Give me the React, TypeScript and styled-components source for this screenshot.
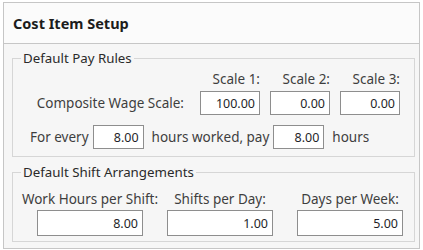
import React from "react";
import styled, { createGlobalStyle } from "styled-components";

const GlobalStyle = createGlobalStyle`
  body {
    margin: 0;
    background: #ffffff;
    font-family: "Noto Sans", "Open Sans", sans-serif;
  }
`;

const Frame = styled.div`
  width: 417px;
  height: 247px;
  margin: 2px 0 0 3px;
  border: 1px solid #c6c6c6;
  box-sizing: border-box;
  background: #f6f6f6;
  display: flex;
  flex-direction: column;
`;

const Header = styled.div`
  height: 41px;
  box-sizing: border-box;
  border-bottom: 1px solid #c6c6c6;
  background: #fbfbfb;
  display: flex;
  align-items: center;
  padding-left: 9px;
`;

const Title = styled.h1`
  margin: 0;
  font-size: 14.5px;
  font-weight: 700;
  color: #1c1c1c;
`;

const Body = styled.div`
  flex: 1;
  padding: 6px 4px 5px 8px;
  display: flex;
  flex-direction: column;
`;

const Group = styled.fieldset<{ $gap?: number; $top?: number; $bottom?: number }>`
  margin: ${(p) => p.$gap ?? 0}px 0 0 0;
  padding: ${(p) => p.$top ?? 5}px 0 ${(p) => p.$bottom ?? 7}px 0;
  min-width: 0;
  border: 1px solid #d6d6d6;
  font-size: 13.5px;
  color: #3e3e3e;
`;

const Legend = styled.legend`
  margin-left: 8px;
  padding: 0 2px;
  font-size: 13.3px;
  line-height: 16px;
  color: #2a2a2a;
`;

const ScaleGrid = styled.div`
  display: grid;
  grid-template-columns: 1fr 60px 60px 60px;
  column-gap: 10px;
  row-gap: 4px;
  padding-right: 14px;
  align-items: center;
`;

const Label = styled.span<{ $align?: string }>`
  line-height: 16px;
  white-space: nowrap;
  text-align: ${(p) => p.$align ?? "left"};
  justify-self: ${(p) => p.$align ?? "start"};
`;

const RowLabel = styled(Label)`
  justify-self: end;
  margin-right: 6px;
`;

const Field = styled.div<{ $w?: number; $h?: number }>`
  width: ${(p) => (p.$w ? `${p.$w}px` : "100%")};
  height: ${(p) => p.$h ?? 24}px;
  box-sizing: border-box;
  border: 1px solid #8e8e8e;
  background: #ffffff;
  display: flex;
  align-items: center;
  justify-content: flex-end;
  padding-right: 4px;
  font-size: 12.5px;
  color: #1f1f2a;
`;

const HoursRow = styled.div`
  display: flex;
  align-items: center;
  margin-top: 10px;
  padding-left: 17px;
  gap: 4px;
`;

const Spacer = styled.span<{ $w: number }>`
  width: ${(p) => p.$w}px;
`;

const ShiftGrid = styled.div`
  display: grid;
  grid-template-columns: repeat(3, 106px);
  column-gap: 24px;
  row-gap: 3px;
  padding-left: 24px;
`;

const CenterLabel = styled(Label)`
  justify-self: center;
`;

export default function App() {
  return (
    <>
      <GlobalStyle />
      <Frame>
        <Header>
          <Title>Cost Item Setup</Title>
        </Header>
        <Body>
          <Group $top={5} $bottom={7}>
            <Legend>Default Pay Rules</Legend>
            <ScaleGrid>
              <span />
              <Label $align="right">Scale 1:</Label>
              <Label $align="right">Scale 2:</Label>
              <Label $align="right">Scale 3:</Label>
              <RowLabel>Composite Wage Scale:</RowLabel>
              <Field>100.00</Field>
              <Field>0.00</Field>
              <Field>0.00</Field>
            </ScaleGrid>
            <HoursRow>
              <Label>For every</Label>
              <Field $w={51}>8.00</Field>
              <Spacer $w={0} />
              <Label>hours worked, pay</Label>
              <Field $w={51}>8.00</Field>
              <Spacer $w={0} />
              <Label>hours</Label>
            </HoursRow>
          </Group>
          <Group $gap={7} $top={11} $bottom={5}>
            <Legend>Default Shift Arrangements</Legend>
            <ShiftGrid>
              <CenterLabel>Work Hours per Shift:</CenterLabel>
              <CenterLabel>Shifts per Day:</CenterLabel>
              <CenterLabel>Days per Week:</CenterLabel>
              <Field $h={26}>8.00</Field>
              <Field $h={26}>1.00</Field>
              <Field $h={26}>5.00</Field>
            </ShiftGrid>
          </Group>
        </Body>
      </Frame>
    </>
  );
}
